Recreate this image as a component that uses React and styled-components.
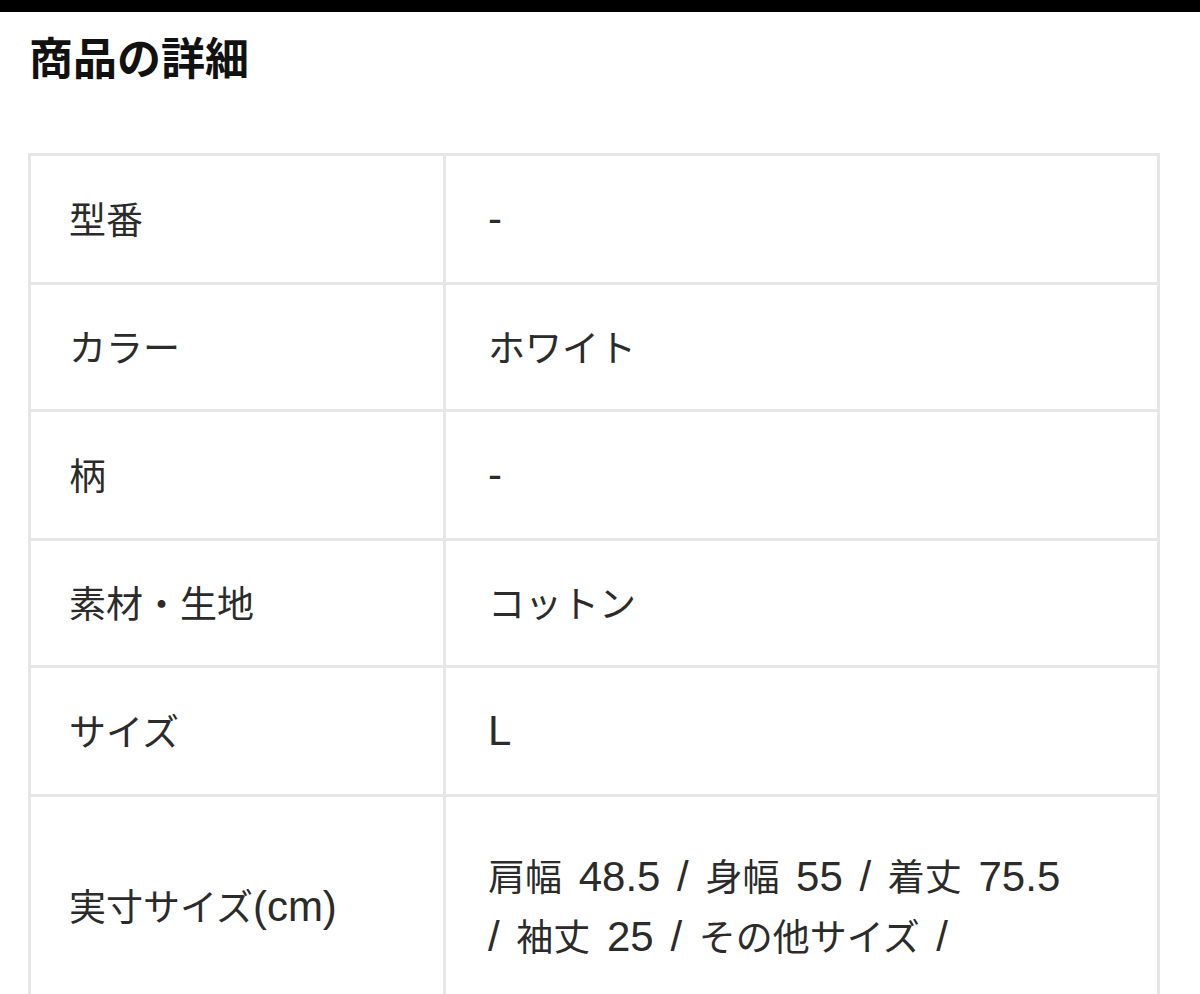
import React from 'react';
import styled, { createGlobalStyle } from 'styled-components';

const GlobalStyle = createGlobalStyle`
  html, body {
    margin: 0;
    padding: 0;
    background: #ffffff;
  }
  body {
    font-family: "Noto Sans CJK JP", sans-serif;
    color: #333333;
  }
`;

const TopBar = styled.div`
  height: 12px;
  background: #000000;
`;

const Page = styled.div`
  padding: 0 40px 0 28px;
`;

const Title = styled.h1`
  margin: 0;
  padding: 12px 0 0 1px;
  height: 141px;
  box-sizing: border-box;
  font-family: "Noto Sans CJK JP", sans-serif;
  font-size: 44px;
  font-weight: 700;
  line-height: 64px;
  color: #111111;
`;

const Table = styled.div`
  width: 1132px;
  border: 3px solid #e6e6e6;
  border-bottom: none;
  box-sizing: border-box;
`;

const Row = styled.div`
  display: grid;
  grid-template-columns: 412px 1fr;
  border-bottom: 3px solid #e6e6e6;
`;

const Cell = styled.div`
  display: flex;
  align-items: center;
  min-height: 58px;
  padding: ${(p) => (p.$tall ? '49px' : '32px')} 30px ${(p) => (p.$tall ? '49px' : '34px')} ${(p) => (p.$value ? '42px' : '38px')};
  border-left: ${(p) => (p.$value ? '3px solid #e6e6e6' : 'none')};
  font-family: "Noto Sans CJK JP", sans-serif;
  font-size: 37px;
  line-height: 58px;
  color: #2b2b2b;
`;

const Latin = styled.span`
  font-family: "Liberation Sans", Arial, sans-serif;
  font-size: 42px;
  line-height: 58px;
  word-spacing: 5px;
`;

// wrap runs of latin characters so they get the wider latin face
const mixed = (text) =>
  text.split(/([\x20-\x7e]+)/).map((part, i) =>
    /^[\x20-\x7e]+$/.test(part) ? <Latin key={i}>{part}</Latin> : part
  );

const rows = [
  { label: '型番', value: '-' },
  { label: 'カラー', value: 'ホワイト' },
  { label: '柄', value: '-' },
  { label: '素材・生地', value: 'コットン' },
  { label: 'サイズ', value: 'L' },
];

const App = () => {
  return (
    <>
      <GlobalStyle />
      <TopBar />
      <Page>
        <Title>商品の詳細</Title>
        <Table>
          {rows.map((r) => (
            <Row key={r.label}>
              <Cell>{mixed(r.label)}</Cell>
              <Cell $value>
                <span>{mixed(r.value)}</span>
              </Cell>
            </Row>
          ))}
          <Row>
            <Cell $tall>
              <span>{mixed('実寸サイズ(cm)')}</span>
            </Cell>
            <Cell $value $tall>
              <span>
                {mixed('肩幅 48.5 / 身幅 55 / 着丈 75.5')}
                <br />
                {mixed('/ 袖丈 25 / その他サイズ /')}
              </span>
            </Cell>
          </Row>
        </Table>
      </Page>
    </>
  );
};

export default App;
